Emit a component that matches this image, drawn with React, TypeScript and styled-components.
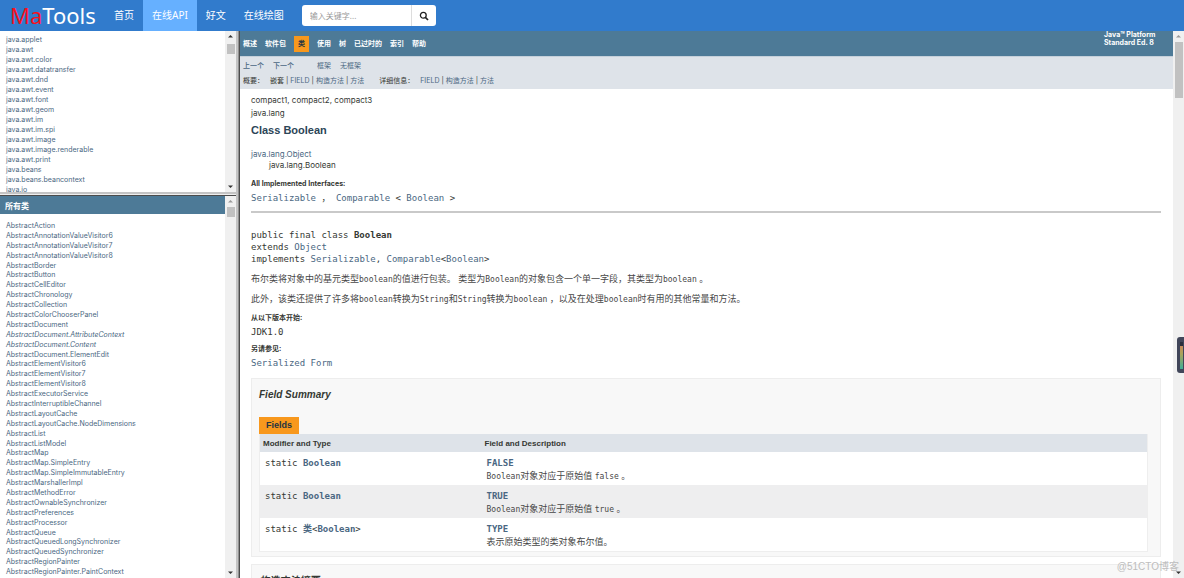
import React from "react";
import styled, { createGlobalStyle } from "styled-components";

const sans = `"Liberation Sans", "Noto Sans CJK SC", sans-serif`;
const small = `Inter, "Noto Sans CJK SC", sans-serif`;
const mono = `"DejaVu Sans Mono", "Noto Sans CJK SC", monospace`;
const ui = `"Noto Sans", "Noto Sans CJK SC", sans-serif`;

const Global = createGlobalStyle`
  *, *::before, *::after { box-sizing: border-box; }
  html, body { margin: 0; height: 100%; overflow: hidden; }
  #root { height: 100%; }
  body { background: #fff; color: #353833; font: 9px/12px ${sans}; }
  ul, p, h1, h2, h3, dl, dd { margin: 0; padding: 0; }
  ul { list-style: none; }
  a { color: #4a6782; text-decoration: none; }
  code { font: 8px ${mono}; }
`;

const Page = styled.div`
  display: flex;
  flex-direction: column;
  height: 100vh;
  position: relative;
`;

/* ---------- site header ---------- */

const Header = styled.header`
  flex: none;
  display: flex;
  align-items: center;
  height: 31px;
  padding-left: 10px;
  background: #317bcc;
  font-family: ${ui};
`;

const Logo = styled.a`
  width: 95px;
  color: #fff;
  font-size: 22px;
  line-height: 31px;
  span { color: #f8101c; }
`;

const SiteLink = styled.a<{ $active?: boolean }>`
  padding: 0 9px;
  color: #fff;
  font-size: 10px;
  line-height: 31px;
  background: ${(p) => (p.$active ? "#66b0ff" : "transparent")};
`;

const Search = styled.form`
  display: flex;
  height: 21px;
  margin-left: 9px;
  border-radius: 3px;
  background: #fff;
  overflow: hidden;
`;

const SearchInput = styled.input`
  width: 110px;
  padding: 0 8px;
  border: 0;
  border-right: 1px solid #ddd;
  background: transparent;
  font: 8px/20px ${ui};
  &::placeholder { color: #999; opacity: 1; }
`;

const SearchButton = styled.button`
  display: flex;
  align-items: center;
  justify-content: center;
  width: 24px;
  padding: 0;
  border: 0;
  background: transparent;
`;

/* ---------- frames ---------- */

const Frames = styled.div`
  flex: 1;
  min-height: 0;
  display: flex;
`;

const Side = styled.div`
  flex: none;
  width: 236px;
  display: flex;
  flex-direction: column;
`;

const Frame = styled.section<{ $height?: string }>`
  display: flex;
  min-height: 0;
  min-width: 0;
  flex: ${(p) => (p.$height ? `none` : "1")};
  height: ${(p) => p.$height ?? "auto"};
`;

const FrameBody = styled.div`
  flex: 1;
  min-width: 0;
  overflow: hidden;
  display: flex;
  flex-direction: column;
`;

const RowSplit = styled.div`
  flex: none;
  height: 4px;
  border-top: 2px solid #c4c4c4;
  border-bottom: 1px solid #4c4c4c;
  background: #eee;
`;

const ColumnSplit = styled.div`
  flex: none;
  width: 4px;
  border-left: 2px solid #c4c4c4;
  border-right: 1px solid #4c4c4c;
  background: #909090;
`;

const Track = styled.div`
  flex: none;
  display: flex;
  flex-direction: column;
  align-items: center;
  width: 11px;
  background: #f0f0f0;
`;

const Thumb = styled.div<{ $size: number }>`
  width: 8px;
  height: ${(p) => p.$size}px;
  margin-bottom: auto;
  background: #c1c1c1;
`;

const Arrow = styled.svg`
  display: block;
  width: 9px;
  height: 9px;
  margin: 1px 0;
`;

const Spacer = styled.div`
  height: 2px;
`;

function Scrollbar({ size, scrolled }: { size: number; scrolled?: boolean }) {
  return (
    <Track aria-hidden="true">
      <Arrow viewBox="0 0 9 9">
        <path d="M2 5.5 4.5 3 7 5.5z" fill={scrolled ? "#333" : "#999"} />
      </Arrow>
      {scrolled && <Spacer />}
      <Thumb $size={size} />
      <Arrow viewBox="0 0 9 9">
        <path d="M2 3.5 4.5 6 7 3.5z" fill="#333" />
      </Arrow>
    </Track>
  );
}

const PackageList = styled.ul`
  padding: 4px 6px 0;
  font: 7px/10px ${small};
`;

const ClassList = styled.ul`
  flex: 1;
  display: grid;
  grid-auto-rows: 1fr;
  padding: 7px 6px 1px;
  font: 7px/9px ${small};
`;

const TypeLink = styled.a<{ $italic?: boolean }>`
  font-style: ${(p) => (p.$italic ? "italic" : "normal")};
`;

const ClassesTitle = styled.h2`
  flex: none;
  padding: 3px 5px 0;
  color: #fff;
  background: #4d7a97;
  font: bold 8px/15px ${sans};
`;

/* ---------- documentation ---------- */

const DocNav = styled.nav`
  flex: none;
  display: flex;
  align-items: center;
  height: 25px;
  background: #4d7a97;
  font-family: ${small};
  font-size: 7px;
  font-weight: bold;
  a { color: #fff; }
`;

const DocTabs = styled.ul`
  display: flex;
  align-items: center;
  gap: 8px;
  padding-left: 3px;
`;

const Current = styled.li`
  padding: 0 4px;
  background: #f8981d;
  color: #253441;
  line-height: 16px;
`;

const Platform = styled.div`
  align-self: flex-start;
  margin-left: auto;
  width: 69px;
  color: #fff;
  line-height: 8px;
`;

const SubNav = styled.div`
  flex: none;
  height: 33px;
  padding: 1px 3px 0;
  border-top: 1px solid #c5d0da;
  background: #dee3e9;
  font-family: ${small};
  font-size: 7px;
`;

const SubRow = styled.div<{ $gap: number }>`
  display: flex;
  gap: ${(p) => p.$gap}px;
  line-height: 15px;
  white-space: pre;
`;

const SubGroup = styled.div<{ $gap?: number; $strong?: boolean }>`
  display: flex;
  gap: ${(p) => p.$gap ?? 2}px;
  font-weight: ${(p) => (p.$strong ? 500 : 400)};
`;

const Label = styled.span`
  margin-right: 4px;
`;

const Doc = styled.main`
  flex: 1;
  min-height: 0;
  overflow: hidden;
  padding: 5px 12px 0 11px;
`;

const Line = styled.div`
  font: 8px/13px ${small};
`;

const Title = styled.h1`
  margin-top: 2px;
  color: #2c4557;
  font: bold 11px/16px ${sans};
`;

const Tree = styled.ul`
  margin: 11px 0 6px;
  font: 8px/11px ${small};
  ul { padding-left: 18px; }
`;

const Facts = styled.dl`
  dt {
    font: bold 7px/13px ${small};
    margin-top: 2px;
  }
  dd {
    font: 9px/16px ${mono};
  }
`;

const Rule = styled.hr`
  margin: 5px 0 16px;
  border: 0;
  height: 2px;
  background: #c9c9c9;
`;

const Code = styled.div`
  font-family: ${mono};
  white-space: pre;
`;

const Para = styled.p`
  margin-top: 8px;
  color: #474747;
  font-family: ${sans};
`;

const ParaGroup = styled.div`
  padding-bottom: 4px;
`;

const Summary = styled.section`
  margin-top: 7px;
  padding: 8px 12px 4px 7px;
  border: 1px solid #ededed;
  background: #f8f8f8;
`;

const SummaryTitle = styled.h3`
  font: italic bold 10px/16px ${sans};
`;

const Fields = styled.table`
  width: 100%;
  margin-top: 14px;
  border-collapse: collapse;
  border: 1px solid #eee;
  border-top: 0;
  table-layout: fixed;
  caption { text-align: left; }
  th {
    padding: 1px 3px 0;
    background: #dee3e9;
    text-align: left;
    font: bold 8px/17px ${sans};
  }
  th:first-child { width: 25%; }
  td {
    height: 33px;
    padding: 4px 5px 1px;
    vertical-align: top;
    font: 9px/14px ${mono};
    background: #fff;
  }
  tr:nth-child(even) td { background: #eeeeef; }
`;

const TabLabel = styled.span`
  display: inline-block;
  padding: 0 7px;
  background: #f8981d;
  color: #253441;
  font: bold 9px/17px ${sans};
  vertical-align: top;
`;

const Note = styled.div`
  color: #474747;
  font: 9px/13px ${sans};
`;

/* ---------- overlays ---------- */

const Meter = styled.div`
  position: absolute;
  top: 337px;
  right: 0;
  width: 7px;
  height: 36px;
  padding: 5px 1px 4px 3px;
  border-radius: 3px 0 0 3px;
  background: #41465a;
  &::before {
    content: "";
    display: block;
    height: 100%;
    border-top: 4px solid #2b2e3c;
    background: linear-gradient(#c98a5a, #a9a45c 35%, #3fae96);
  }
`;

const Watermark = styled.div`
  position: absolute;
  right: 5px;
  bottom: 4px;
  color: #bdbdbd;
  font-size: 10px;
  line-height: 14px;
`;

const packages = [
  "java.applet", "java.awt", "java.awt.color", "java.awt.datatransfer", "java.awt.dnd",
  "java.awt.event", "java.awt.font", "java.awt.geom", "java.awt.im", "java.awt.im.spi",
  "java.awt.image", "java.awt.image.renderable", "java.awt.print", "java.beans",
  "java.beans.beancontext", "java.io",
];

const classes = [
  "AbstractAction", "AbstractAnnotationValueVisitor6", "AbstractAnnotationValueVisitor7",
  "AbstractAnnotationValueVisitor8", "AbstractBorder", "AbstractButton", "AbstractCellEditor",
  "AbstractChronology", "AbstractCollection", "AbstractColorChooserPanel", "AbstractDocument",
  "AbstractDocument.AttributeContext", "AbstractDocument.Content", "AbstractDocument.ElementEdit",
  "AbstractElementVisitor6", "AbstractElementVisitor7", "AbstractElementVisitor8",
  "AbstractExecutorService", "AbstractInterruptibleChannel", "AbstractLayoutCache",
  "AbstractLayoutCache.NodeDimensions", "AbstractList", "AbstractListModel", "AbstractMap",
  "AbstractMap.SimpleEntry", "AbstractMap.SimpleImmutableEntry", "AbstractMarshallerImpl",
  "AbstractMethodError", "AbstractOwnableSynchronizer", "AbstractPreferences",
  "AbstractProcessor", "AbstractQueue", "AbstractQueuedLongSynchronizer",
  "AbstractQueuedSynchronizer", "AbstractRegionPainter", "AbstractRegionPainter.PaintContext",
];

const interfaces = new Set(["AbstractDocument.AttributeContext", "AbstractDocument.Content"]);

const L = ({ children }: { children: React.ReactNode }) => <a href="#">{children}</a>;

function Members() {
  return (
    <>
      <L>FIELD</L>
      <span>|</span>
      <L>构造方法</L>
      <span>|</span>
      <L>方法</L>
    </>
  );
}

export default function App() {
  return (
    <Page>
      <Global />
      <Header>
        <Logo href="#"><span>Ma</span>Tools</Logo>
        <SiteLink href="#">首页</SiteLink>
        <SiteLink href="#" $active>在线API</SiteLink>
        <SiteLink href="#">好文</SiteLink>
        <SiteLink href="#">在线绘图</SiteLink>
        <Search>
          <SearchInput aria-label="搜索" placeholder="输入关键字..." />
          <SearchButton type="button" aria-label="搜索">
            <svg width="10" height="10" viewBox="0 0 10 10" fill="none" stroke="#222">
              <circle cx="4.3" cy="4.3" r="2.9" strokeWidth="1.3" />
              <path d="M6.5 6.5 9 9" strokeWidth="1.7" />
            </svg>
          </SearchButton>
        </Search>
      </Header>
      <Frames>
        <Side>
          <Frame $height="161px">
            <FrameBody>
              <PackageList>
                {packages.map((p) => (
                  <li key={p}><TypeLink href="#">{p}</TypeLink></li>
                ))}
              </PackageList>
            </FrameBody>
            <Scrollbar size={10} scrolled />
          </Frame>
          <RowSplit />
          <Frame>
            <FrameBody>
              <ClassesTitle>所有类</ClassesTitle>
              <ClassList>
                {classes.map((c) => (
                  <li key={c}><TypeLink href="#" $italic={interfaces.has(c)}>{c}</TypeLink></li>
                ))}
              </ClassList>
            </FrameBody>
            <Scrollbar size={10} />
          </Frame>
        </Side>
        <ColumnSplit />
        <Frame>
          <FrameBody>
            <DocNav>
              <DocTabs>
                <li><L>概述</L></li>
                <li><L>软件包</L></li>
                <Current>类</Current>
                <li><L>使用</L></li>
                <li><L>树</L></li>
                <li><L>已过时的</L></li>
                <li><L>索引</L></li>
                <li><L>帮助</L></li>
              </DocTabs>
              <Platform>Java™ Platform<br />Standard Ed. 8</Platform>
            </DocNav>
            <SubNav>
              <SubRow $gap={23}>
                <SubGroup $gap={9} $strong><L>上一个</L><L>下一个</L></SubGroup>
                <SubGroup $gap={9}><L>框架</L><L>无框架</L></SubGroup>
              </SubRow>
              <SubRow $gap={15}>
                <SubGroup>
                  <Label>概要：</Label>
                  <span>嵌套</span>
                  <span>|</span>
                  <Members />
                </SubGroup>
                <SubGroup>
                  <Label>详细信息：</Label>
                  <Members />
                </SubGroup>
              </SubRow>
            </SubNav>
            <Doc>
              <Line>compact1, compact2, compact3</Line>
              <Line>java.lang</Line>
              <Title>Class Boolean</Title>
              <Tree>
                <li><L>java.lang.Object</L></li>
                <li><ul><li>java.lang.Boolean</li></ul></li>
              </Tree>
              <Facts>
                <dt>All Implemented Interfaces:</dt>
                <dd><L>Serializable</L> ， <L>Comparable</L> &lt; <L>Boolean</L> &gt;</dd>
              </Facts>
              <Rule />
              <Code>public final class <b>Boolean</b></Code>
              <Code>extends <L>Object</L></Code>
              <Code>implements <L>Serializable</L>, <L>Comparable</L>&lt;<L>Boolean</L>&gt;</Code>
              <ParaGroup>
                <Para>
                  布尔类将对象中的基元类型<code>boolean</code>的值进行包装。 类型为<code>Boolean</code>的对象包含一个单一字段，其类型为<code>boolean</code> 。
                </Para>
                <Para>
                  此外，该类还提供了许多将<code>boolean</code>转换为<code>String</code>和<code>String</code>转换为<code>boolean</code> ，以及在处理<code>boolean</code>时有用的其他常量和方法。
                </Para>
              </ParaGroup>
              <Facts>
                <dt>从以下版本开始:</dt>
                <dd>JDK1.0</dd>
                <dt>另请参见:</dt>
                <dd><L>Serialized Form</L></dd>
              </Facts>
              <Summary>
                <SummaryTitle>Field Summary</SummaryTitle>
                <Fields>
                  <caption><TabLabel>Fields</TabLabel></caption>
                  <thead>
                    <tr><th>Modifier and Type</th><th>Field and Description</th></tr>
                  </thead>
                  <tbody>
                    <tr>
                      <td>static <b><L>Boolean</L></b></td>
                      <td><b><L>FALSE</L></b><Note><code>Boolean</code>对象对应于原始值 <code>false</code> 。</Note></td>
                    </tr>
                    <tr>
                      <td>static <b><L>Boolean</L></b></td>
                      <td><b><L>TRUE</L></b><Note><code>Boolean</code>对象对应于原始值 <code>true</code> 。</Note></td>
                    </tr>
                    <tr>
                      <td>static <b><L>类</L></b>&lt;<b><L>Boolean</L></b>&gt;</td>
                      <td><b><L>TYPE</L></b><Note>表示原始类型的类对象布尔值。</Note></td>
                    </tr>
                  </tbody>
                </Fields>
              </Summary>
              <Summary>
                <SummaryTitle>构造方法摘要</SummaryTitle>
              </Summary>
            </Doc>
          </FrameBody>
          <Scrollbar size={56} />
        </Frame>
      </Frames>
      <Meter aria-hidden="true" />
      <Watermark>@51CTO博客</Watermark>
    </Page>
  );
}
